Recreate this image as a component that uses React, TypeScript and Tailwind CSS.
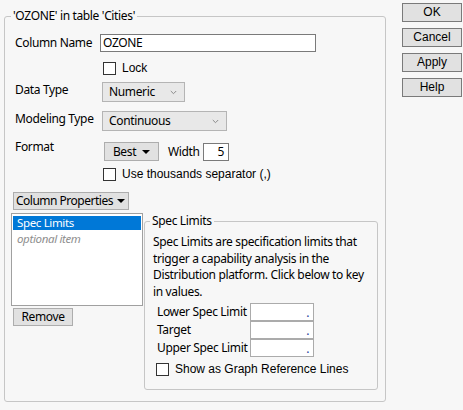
import React from 'react'

const ui = "font-['Noto_Sans',sans-serif] tracking-[-0.35px]"
const classic = "font-['Liberation_Sans',Arial,sans-serif] tracking-normal"

function Chevron() {
  return (
    <svg width="7" height="5" viewBox="0 0 7 5" className="shrink-0">
      <path d="M0.8 1 L3.5 3.7 L6.2 1" fill="none" stroke="#8a8a8a" strokeWidth="1" />
    </svg>
  )
}

function Triangle() {
  return (
    <svg width="8" height="4" viewBox="0 0 8 4" className="shrink-0">
      <polygon points="0,0 8,0 4,4" fill="#000" />
    </svg>
  )
}

function CheckBox({ label }: { label: string }) {
  return (
    <div className="flex items-center h-[13px]">
      <div className="w-[13px] h-[13px] border border-[#333] bg-white shrink-0" />
      <span className={`${classic} ml-[6px] text-[12px] leading-[13px] whitespace-nowrap`}>{label}</span>
    </div>
  )
}

function Select({ value, width }: { value: string; width: string }) {
  return (
    <div
      className={`${width} h-[20px] border border-[#b4b4b4] bg-[#e8e8e8] flex items-center justify-between pl-[6px] pr-[7px]`}
    >
      <span className="leading-[18px]">{value}</span>
      <Chevron />
    </div>
  )
}

function DialogButton({ label }: { label: string }) {
  return (
    <button
      className={`${classic} w-[60px] h-[19px] border border-[#7a7a7a] bg-[#e1e1e1] text-[12px] leading-[17px] text-black`}
    >
      {label}
    </button>
  )
}

function SpecRow({ label }: { label: string }) {
  return (
    <div className="flex items-center h-[18px]">
      <span className="w-[93px] leading-[16px] whitespace-nowrap">{label}</span>
      <div className="w-[64px] h-[18px] border border-[#ababab] bg-white flex items-end justify-end pr-[4px]">
        <span className="leading-[14px] text-[#1c3d9c]">.</span>
      </div>
    </div>
  )
}

export default function App() {
  return (
    <div className={`${ui} w-[463px] h-[410px] bg-[#f7f7f7] flex text-[12px] text-black overflow-hidden`}>
      <fieldset className="ml-[4px] mt-[8px] w-[382px] h-[394px] border border-[#c6c6c6] rounded-[3px]">
        <legend className="ml-[6px] px-[2px] leading-[16px]">'OZONE' in table 'Cities'</legend>

        <div className="pl-[10px] flex flex-col">
          <div className="mt-[10px] flex items-center h-[18px]">
            <span className="w-[85px] whitespace-nowrap">Column Name</span>
            <div className="w-[216px] h-[18px] border border-[#7a7a7a] bg-white px-[2px] leading-[16px]">OZONE</div>
          </div>

          <div className="mt-[10px] ml-[88px]">
            <CheckBox label="Lock" />
          </div>

          <div className="mt-[7px] flex items-center">
            <span className="w-[87px] -mt-[4px] whitespace-nowrap">Data Type</span>
            <Select value="Numeric" width="w-[83px]" />
          </div>

          <div className="mt-[9px] flex items-center">
            <span className="w-[87px] -mt-[5px] whitespace-nowrap">Modeling Type</span>
            <Select value="Continuous" width="w-[125px]" />
          </div>

          <div className="mt-[11px] flex items-center h-[19px]">
            <span className="w-[89px] -mt-[10px] whitespace-nowrap">Format</span>
            <div className="w-[55px] h-[19px] border border-[#adadad] bg-[#e1e1e1] flex items-center justify-center gap-[6px]">
              <span className="leading-[17px]">Best</span>
              <Triangle />
            </div>
            <span className="ml-[9px] w-[35px]">Width</span>
            <div className="w-[26px] h-[18px] border border-[#7a7a7a] bg-white text-right pr-[4px] leading-[16px]">5</div>
          </div>

          <div className="mt-[7px] ml-[88px]">
            <CheckBox label="Use thousands separator (,)" />
          </div>
        </div>

        <div className="pl-[6px] flex flex-col">
          <div className="mt-[11px] ml-[2px] w-[116px] h-[18px] border border-[#adadad] bg-[#e1e1e1] flex items-center gap-[4px] pl-[2px]">
            <span className="leading-[16px] whitespace-nowrap tracking-[-0.5px]">Column Properties</span>
            <Triangle />
          </div>

          <div className="mt-[3px] flex items-start">
            <div className="flex flex-col">
              <div className="w-[132px] h-[93px] border border-[#a0a0a0] bg-white p-[1px] text-[11.5px]">
                <div className="h-[14px] mt-[1px] bg-[#0078d7] text-white pl-[4px] leading-[14px]">Spec Limits</div>
                <div className="pl-[4px] mt-[2px] leading-[14px] italic text-[#8e8e8e]">optional item</div>
              </div>
              <button className="mt-[2px] ml-[2px] w-[60px] h-[18px] border border-[#adadad] bg-[#e1e1e1] leading-[16px] text-black">
                Remove
              </button>
            </div>

            <fieldset className="ml-[1px] w-[234px] h-[177px] border border-[#c6c6c6] rounded-[3px]">
              <legend className="ml-[5px] px-[2px] leading-[16px]">Spec Limits</legend>
              <div className="pl-[8px] mt-[5px] leading-[16.5px] whitespace-nowrap">
                <div>Spec Limits are specification limits that</div>
                <div>trigger a capability analysis in the</div>
                <div>Distribution platform. Click below to key</div>
                <div>in values.</div>
              </div>
              <div className="pl-[12px] mt-[3px] flex flex-col">
                <SpecRow label="Lower Spec Limit" />
                <SpecRow label="Target" />
                <SpecRow label="Upper Spec Limit" />
              </div>
              <div className="pl-[11px] mt-[6px]">
                <CheckBox label="Show as Graph Reference Lines" />
              </div>
            </fieldset>
          </div>
        </div>
      </fieldset>

      <div className="ml-[16px] mt-[3px] flex flex-col gap-[6px]">
        <DialogButton label="OK" />
        <DialogButton label="Cancel" />
        <DialogButton label="Apply" />
        <DialogButton label="Help" />
      </div>
    </div>
  )
}
